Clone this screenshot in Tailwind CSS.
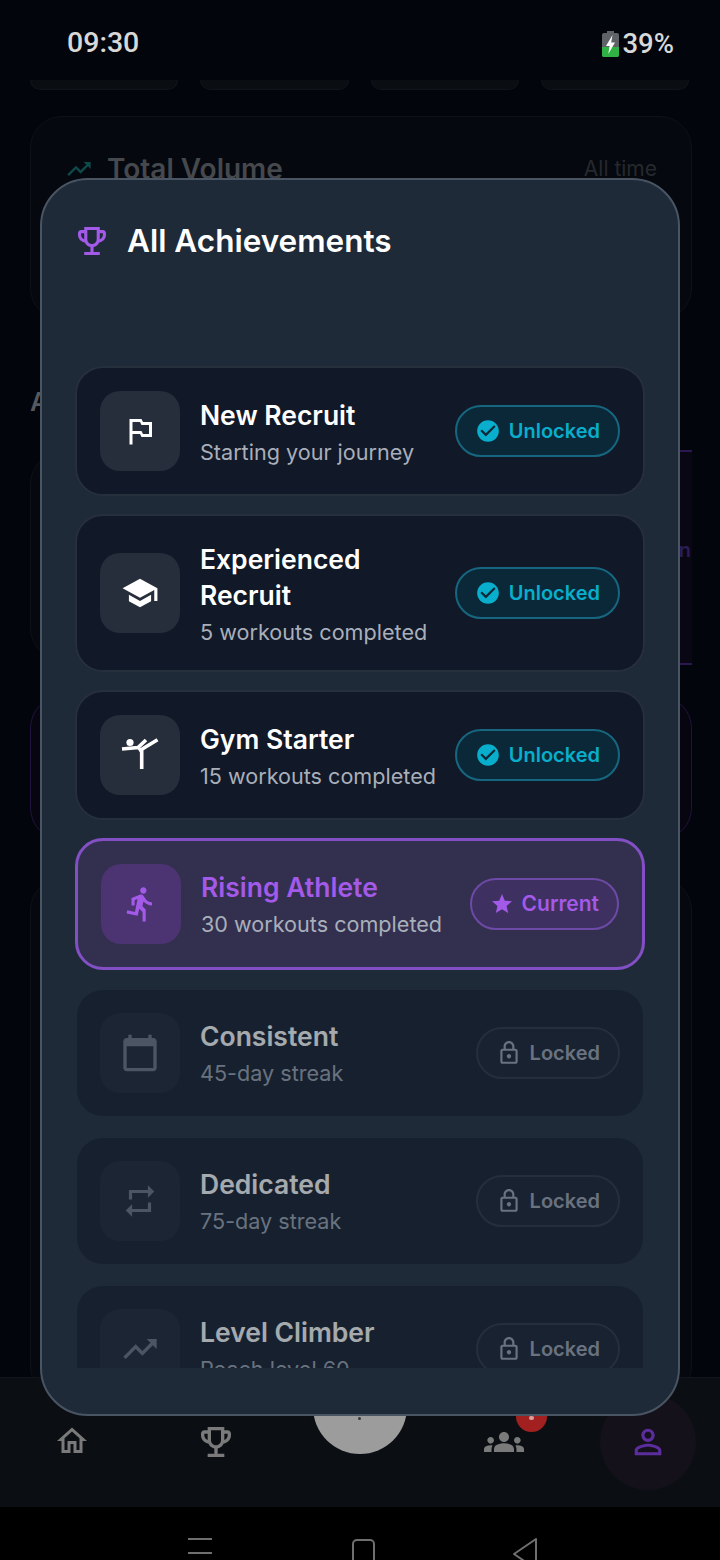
<!DOCTYPE html>
<html lang="en">
<head>
    <meta charset="UTF-8">
    <meta name="viewport" content="width=device-width, initial-scale=1.0">
    <title>All Achievements</title>
    <script src="https://cdn.jsdelivr.net/npm/@tailwindcss/browser@4"></script>
</head>
<body class="bg-[#02050c]">
<div class="relative w-[720px] h-[1560px] overflow-hidden bg-[#02050c] font-['Inter',sans-serif]">

    <!-- Status bar -->
    <div class="h-[80px] flex justify-between items-center pl-[67px] pr-[46px] pt-[7px] text-[#d8d8d8] text-[27.5px] font-medium font-['Roboto',sans-serif]">
        <span class="text-[28.5px]">09:30</span>
        <div class="flex items-center gap-[3px]">
            <svg class="w-[17px] h-[26px]" viewBox="0 0 17 26">
                <rect x="5" y="0" width="7" height="3" fill="#5f6368"/>
                <rect x="0" y="2" width="17" height="24" rx="2" fill="#5f6368"/>
                <path d="M0 16h17v8a2 2 0 0 1-2 2H2a2 2 0 0 1-2-2z" fill="#2fb344"/>
                <path d="M10.5 4 4 15h3.6L6.3 23 13 11.5H9.2z" fill="#fff"/>
            </svg>
            <span>39%</span>
        </div>
    </div>

    <!-- Dimmed page behind the dialog -->
    <div class="h-[1297px] pl-[30px] pr-[28px] overflow-hidden">
        <div class="grid grid-cols-4 gap-[22px] h-[10px] pr-[3px]">
            <div class="rounded-b-[24px] border border-t-0 border-[#11141a] bg-[#0a0d12]"></div>
            <div class="rounded-b-[24px] border border-t-0 border-[#11141a] bg-[#0a0d12]"></div>
            <div class="rounded-b-[24px] border border-t-0 border-[#11141a] bg-[#0a0d12]"></div>
            <div class="rounded-b-[24px] border border-t-0 border-[#11141a] bg-[#0a0d12]"></div>
        </div>
        <div class="mt-[26px] h-[204px] rounded-[32px] border border-[#0e1116] bg-[#05080e] px-[34px] pt-[34px] flex justify-between items-start">
            <div class="flex items-center gap-[14px]">
                <svg class="w-[28px] h-[28px] text-[#0e4a4a]" viewBox="0 0 24 24" fill="currentColor"><path d="M16 6l2.29 2.29-4.88 4.88-4-4L2 16.59 3.41 18l6-6 4 4 6.3-6.29L22 12V6z"/></svg>
                <span class="text-[28px] leading-[36px] font-semibold text-[#45484d]">Total Volume</span>
            </div>
            <span class="text-[21px] leading-[36px] text-[#26292d]">All time</span>
        </div>
        <div class="mt-[64px] text-[26px] leading-[36px] font-semibold text-[#55585c]">All</div>
        <div class="mt-[32px] h-[208px] relative rounded-[32px] border border-[#0e1116] bg-[#05080e]">
            <div class="absolute right-[-1px] top-[-3px] w-[40px] h-[215px] bg-[#0a0714] border-y-2 border-[#2c1850] flex items-center justify-end pb-[16px]">
                <span class="text-[20px] font-semibold text-[#2d1c55] pr-[1px]">in</span>
            </div>
        </div>
        <div class="mt-[36px] h-[144px] rounded-[32px] border border-[#21123f] bg-[#070510]"></div>
        <div class="mt-[38px] h-[520px] rounded-[32px] border border-[#0e1116] bg-[#05080e]"></div>
    </div>

    <!-- Bottom navigation -->
    <div class="relative h-[130px] bg-[#0b0f14] border-t border-[#12161c]">
        <div class="absolute left-[600px] top-[16px] w-[96px] h-[96px] rounded-full bg-[#14111b]"></div>
        <div class="absolute left-[313px] top-[-18px] w-[94px] h-[94px] rounded-full bg-[#9c9c9c]"></div>
        <div class="absolute left-[516px] top-[22px] w-[31px] h-[32px] rounded-full bg-[#a32020]"></div>
        <div class="absolute left-[358px] top-[39px] w-[3px] h-[3px] rounded-full bg-[#3a3a3a]"></div>
        <div class="absolute left-[529px] top-[38px] w-[5px] h-[4px] rounded-full bg-[#d9a0a0]"></div>
        <svg class="absolute left-[54px] top-[45px] w-[36px] h-[36px] text-[#7a7a7a]" viewBox="0 0 24 24" fill="currentColor"><path d="M12 5.69l5 4.5V18h-2v-6H9v6H7v-7.81l5-4.5M12 3L2 12h3v8h6v-6h2v6h6v-8h3L12 3z"/></svg>
        <svg class="absolute left-[196px] top-[44px] w-[40px] h-[40px] text-[#7a7a7a]" viewBox="0 0 24 24" fill="currentColor"><path d="M19 5h-2V3H7v2H5c-1.1 0-2 .9-2 2v1c0 2.55 1.92 4.63 4.39 4.94.63 1.5 1.98 2.63 3.61 2.96V19H7v2h10v-2h-4v-3.1c1.63-.33 2.98-1.46 3.61-2.96C19.08 12.63 21 10.55 21 8V7c0-1.1-.9-2-2-2zM5 8V7h2v3.82C5.84 10.4 5 9.3 5 8zm7 6c-1.65 0-3-1.35-3-3V5h6v6c0 1.65-1.35 3-3 3zm7-6c0 1.3-.84 2.4-2 2.82V7h2v1z"/></svg>
        <svg class="absolute left-[484px] top-[44px] w-[40px] h-[40px] text-[#7a7a7a]" viewBox="0 0 24 24" fill="currentColor"><path d="M12 12.75c1.63 0 3.07.39 4.24.9 1.08.48 1.76 1.56 1.76 2.74V18H6v-1.61c0-1.18.68-2.26 1.76-2.74 1.17-.52 2.61-.9 4.24-.9zM4 13c1.1 0 2-.9 2-2s-.9-2-2-2-2 .9-2 2 .9 2 2 2zm1.13 1.1C4.76 14.04 4.39 14 4 14c-.99 0-1.93.21-2.78.58C.48 14.9 0 15.62 0 16.43V18h4.5v-1.61c0-.83.23-1.61.63-2.29zM20 13c1.1 0 2-.9 2-2s-.9-2-2-2-2 .9-2 2 .9 2 2 2zm4 3.43c0-.81-.48-1.53-1.22-1.85C21.93 14.21 20.99 14 20 14c-.39 0-.76.04-1.13.1.4.68.63 1.46.63 2.29V18H24v-1.57zM12 6c1.66 0 3 1.34 3 3s-1.34 3-3 3-3-1.34-3-3 1.34-3 3-3z"/></svg>
        <svg class="absolute left-[628px] top-[44px] w-[40px] h-[40px] text-[#5b2d9e]" viewBox="0 0 24 24" fill="currentColor"><path d="M12 5.9c1.16 0 2.1.94 2.1 2.1s-.94 2.1-2.1 2.1S9.9 9.16 9.9 8s.94-2.1 2.1-2.1m0 9c2.97 0 6.1 1.46 6.1 2.1v1.1H5.9V17c0-.64 3.13-2.1 6.1-2.1M12 4C9.79 4 8 5.79 8 8s1.79 4 4 4 4-1.79 4-4-1.79-4-4-4zm0 9c-2.67 0-8 1.34-8 4v3h16v-3c0-2.66-5.33-4-8-4z"/></svg>
    </div>

    <!-- System navigation -->
    <div class="relative h-[53px] bg-black overflow-hidden">
        <div class="absolute left-[188px] top-[31px] w-[24px] h-[2px] bg-[#6f6f6f]"></div>
        <div class="absolute left-[188px] top-[45px] w-[24px] h-[2px] bg-[#6f6f6f]"></div>
        <div class="absolute left-[352px] top-[32px] w-[23px] h-[40px] rounded-[5px] border-2 border-[#6f6f6f]"></div>
        <svg class="absolute left-[512px] top-[30px] w-[28px] h-[40px]" viewBox="0 0 28 40" fill="none" stroke="#6f6f6f" stroke-width="2" stroke-linejoin="round"><path d="M24 2 2 17l22 15z"/></svg>
    </div>

    <!-- Dialog -->
    <div class="absolute left-[40px] top-[178px] w-[640px] h-[1238px] rounded-[48px] border-2 border-[#4a5564] bg-[#1e2a38] px-[33px] flex flex-col">
        <div class="h-[186px] flex items-start pt-[40px]">
            <svg class="w-[28px] h-[28px] ml-[3px] mr-[21px] mt-[7px] text-[#a35ae8] shrink-0" viewBox="3 3 18 18" fill="currentColor"><path d="M19 5h-2V3H7v2H5c-1.1 0-2 .9-2 2v1c0 2.55 1.92 4.63 4.39 4.94.63 1.5 1.98 2.63 3.61 2.96V19H7v2h10v-2h-4v-3.1c1.63-.33 2.98-1.46 3.61-2.96C19.08 12.63 21 10.55 21 8V7c0-1.1-.9-2-2-2zM5 8V7h2v3.82C5.84 10.4 5 9.3 5 8zm7 6c-1.65 0-3-1.35-3-3V5h6v6c0 1.65-1.35 3-3 3zm7-6c0 1.3-.84 2.4-2 2.82V7h2v1z"/></svg>
            <h2 class="text-[31.5px] leading-[42px] font-semibold text-white">All Achievements</h2>
        </div>

        <div class="h-[1002px] overflow-hidden flex flex-col gap-[18px]">
            <!-- New Recruit -->
            <div class="shrink-0 flex items-center rounded-[28px] border-2 border-[#262f3c] bg-[#111827] p-[23px]">
                <div class="w-[80px] h-[80px] shrink-0 rounded-[20px] bg-[#272e3b] flex items-center justify-center">
                    <svg class="w-[36px] h-[36px] text-white" viewBox="0 0 24 24" fill="currentColor"><path d="M14 6l-1-2H5v17h2v-7h5l1 2h7V6h-6zm4 8h-4l-1-2H7V6h5l1 2h5v6z"/></svg>
                </div>
                <div class="ml-[20px] pt-[4px] flex-1 min-w-0">
                    <div class="text-[26.5px] leading-[36px] font-semibold text-white">New Recruit</div>
                    <div class="mt-[2px] text-[21.6px] leading-[34px] text-[#a9afba]">Starting your journey</div>
                </div>
                <div class="ml-[16px] shrink-0 h-[52px] inline-flex items-center gap-[8px] rounded-full border-2 border-[#17667f] bg-[#0b2838] px-[18px] text-[20px] font-semibold text-[#08aecb]">
                    <svg class="w-[26px] h-[26px]" viewBox="0 0 24 24" fill="currentColor"><path d="M12 2C6.48 2 2 6.48 2 12s4.48 10 10 10 10-4.48 10-10S17.52 2 12 2zm-2 15l-5-5 1.41-1.41L10 14.17l7.59-7.59L19 8l-9 9z"/></svg>
                    <span>Unlocked</span>
                </div>
            </div>

            <!-- Experienced Recruit -->
            <div class="shrink-0 flex items-center rounded-[28px] border-2 border-[#262f3c] bg-[#111827] px-[23px] py-[21px]">
                <div class="w-[80px] h-[80px] shrink-0 rounded-[20px] bg-[#272e3b] flex items-center justify-center">
                    <svg class="w-[38px] h-[38px] text-white" viewBox="0 0 24 24" fill="currentColor"><path d="M12 3L1 9l11 6 9-4.91V17h2V9L12 3z"/><path d="M5 13.18v4L12 21l7-3.82v-4L12 17l-7-3.82z"/></svg>
                </div>
                <div class="ml-[20px] pt-[4px] flex-1 min-w-0">
                    <div class="text-[26.5px] leading-[36px] font-semibold text-white">Experienced Recruit</div>
                    <div class="mt-[2px] text-[21.6px] leading-[34px] text-[#a9afba]">5 workouts completed</div>
                </div>
                <div class="ml-[16px] shrink-0 h-[52px] inline-flex items-center gap-[8px] rounded-full border-2 border-[#17667f] bg-[#0b2838] px-[18px] text-[20px] font-semibold text-[#08aecb]">
                    <svg class="w-[26px] h-[26px]" viewBox="0 0 24 24" fill="currentColor"><path d="M12 2C6.48 2 2 6.48 2 12s4.48 10 10 10 10-4.48 10-10S17.52 2 12 2zm-2 15l-5-5 1.41-1.41L10 14.17l7.59-7.59L19 8l-9 9z"/></svg>
                    <span>Unlocked</span>
                </div>
            </div>

            <!-- Gym Starter -->
            <div class="shrink-0 flex items-center rounded-[28px] border-2 border-[#262f3c] bg-[#111827] p-[23px]">
                <div class="w-[80px] h-[80px] shrink-0 rounded-[20px] bg-[#272e3b] flex items-center justify-center">
                    <svg class="w-[38px] h-[34px] text-white" viewBox="0 0 38 34">
                        <circle cx="9" cy="4.5" r="3.6" fill="currentColor"/>
                        <path d="M1 11 17 9.5 25 2M18 13 36.5 1.7M20.7 10v21" fill="none" stroke="currentColor" stroke-width="3.6"/>
                    </svg>
                </div>
                <div class="ml-[20px] pt-[4px] flex-1 min-w-0">
                    <div class="text-[26.5px] leading-[36px] font-semibold text-white">Gym Starter</div>
                    <div class="mt-[2px] text-[21.6px] leading-[34px] text-[#a9afba] whitespace-nowrap">15 workouts completed</div>
                </div>
                <div class="ml-[16px] shrink-0 h-[52px] inline-flex items-center gap-[8px] rounded-full border-2 border-[#17667f] bg-[#0b2838] px-[18px] text-[20px] font-semibold text-[#08aecb]">
                    <svg class="w-[26px] h-[26px]" viewBox="0 0 24 24" fill="currentColor"><path d="M12 2C6.48 2 2 6.48 2 12s4.48 10 10 10 10-4.48 10-10S17.52 2 12 2zm-2 15l-5-5 1.41-1.41L10 14.17l7.59-7.59L19 8l-9 9z"/></svg>
                    <span>Unlocked</span>
                </div>
            </div>

            <!-- Rising Athlete (current) -->
            <div class="shrink-0 flex items-center rounded-[28px] border-[3px] border-[#8250c4] bg-[#332f4f] p-[23px]">
                <div class="w-[80px] h-[80px] shrink-0 rounded-[20px] bg-[#4c3371] flex items-center justify-center">
                    <svg class="w-[38px] h-[38px] text-[#a35ae8]" viewBox="0 0 24 24" fill="currentColor"><path d="M13.49 5.48c1.1 0 2-.9 2-2s-.9-2-2-2-2 .9-2 2 .9 2 2 2zm-3.6 13.9l1-4.4 2.1 2v6h2v-7.5l-2.1-2 .6-3c1.3 1.5 3.3 2.5 5.5 2.5v-2c-1.9 0-3.5-1-4.3-2.4l-1-1.6c-.4-.6-1-1-1.7-1-.3 0-.5.1-.8.1l-5.2 2.2v4.7h2v-3.4l1.8-.7-1.6 8.1-4.9-1-.4 2 7 1.4z"/></svg>
                </div>
                <div class="ml-[20px] pt-[2px] flex-1 min-w-0">
                    <div class="text-[26.5px] leading-[36px] font-semibold text-[#a35ae8]">Rising Athlete</div>
                    <div class="mt-[2px] text-[21.6px] leading-[34px] text-[#a9afba] whitespace-nowrap">30 workouts completed</div>
                </div>
                <div class="ml-[16px] shrink-0 h-[52px] inline-flex items-center gap-[8px] rounded-full border-2 border-[#6d4aa5] bg-[#3e3060] px-[18px] text-[21px] font-semibold text-[#a35ae8]">
                    <svg class="w-[24px] h-[24px]" viewBox="0 0 24 24" fill="currentColor"><path d="M12 17.27L18.18 21l-1.64-7.03L22 9.24l-7.19-.61L12 2 9.19 8.63 2 9.24l5.46 4.73L5.82 21z"/></svg>
                    <span>Current</span>
                </div>
            </div>

            <!-- Consistent -->
            <div class="shrink-0 flex items-center rounded-[28px] border-2 border-transparent bg-clip-padding bg-[#131b28] p-[23px] opacity-60">
                <div class="w-[80px] h-[80px] shrink-0 rounded-[20px] bg-[#1a2331] flex items-center justify-center">
                    <svg class="w-[40px] h-[40px] text-[#6b7280]" viewBox="0 0 24 24" fill="currentColor"><path d="M20 3h-1V1h-2v2H7V1H5v2H4c-1.1 0-2 .9-2 2v16c0 1.1.9 2 2 2h16c1.1 0 2-.9 2-2V5c0-1.1-.9-2-2-2zm0 18H4V8h16v13z"/></svg>
                </div>
                <div class="ml-[20px] pt-[2px] flex-1 min-w-0">
                    <div class="text-[26.5px] leading-[36px] font-semibold text-white">Consistent</div>
                    <div class="mt-[2px] text-[21.6px] leading-[34px] text-[#9ca3af]">45-day streak</div>
                </div>
                <div class="ml-[16px] shrink-0 h-[52px] inline-flex items-center gap-[8px] rounded-full border-2 border-[#283341] bg-[#161e2b] px-[18px] text-[20px] font-semibold text-[#9ca3af]">
                    <svg class="w-[26px] h-[26px]" viewBox="0 0 24 24" fill="currentColor"><path d="M18 8h-1V6c0-2.76-2.24-5-5-5S7 3.24 7 6v2H6c-1.1 0-2 .9-2 2v10c0 1.1.9 2 2 2h12c1.1 0 2-.9 2-2V10c0-1.1-.9-2-2-2zM9 6c0-1.66 1.34-3 3-3s3 1.34 3 3v2H9V6zm9 14H6V10h12v10zm-6-3c1.1 0 2-.9 2-2s-.9-2-2-2-2 .9-2 2 .9 2 2 2z"/></svg>
                    <span>Locked</span>
                </div>
            </div>

            <!-- Dedicated -->
            <div class="shrink-0 flex items-center rounded-[28px] border-2 border-transparent bg-clip-padding bg-[#131b28] p-[23px] opacity-60">
                <div class="w-[80px] h-[80px] shrink-0 rounded-[20px] bg-[#1a2331] flex items-center justify-center">
                    <svg class="w-[38px] h-[38px] text-[#6b7280]" viewBox="0 0 24 24" fill="currentColor"><path d="M7 7h10v3l4-4-4-4v3H5v6h2V7zm10 10H7v-3l-4 4 4 4v-3h12v-6h-2v4z"/></svg>
                </div>
                <div class="ml-[20px] pt-[2px] flex-1 min-w-0">
                    <div class="text-[26.5px] leading-[36px] font-semibold text-white">Dedicated</div>
                    <div class="mt-[2px] text-[21.6px] leading-[34px] text-[#9ca3af]">75-day streak</div>
                </div>
                <div class="ml-[16px] shrink-0 h-[52px] inline-flex items-center gap-[8px] rounded-full border-2 border-[#283341] bg-[#161e2b] px-[18px] text-[20px] font-semibold text-[#9ca3af]">
                    <svg class="w-[26px] h-[26px]" viewBox="0 0 24 24" fill="currentColor"><path d="M18 8h-1V6c0-2.76-2.24-5-5-5S7 3.24 7 6v2H6c-1.1 0-2 .9-2 2v10c0 1.1.9 2 2 2h12c1.1 0 2-.9 2-2V10c0-1.1-.9-2-2-2zM9 6c0-1.66 1.34-3 3-3s3 1.34 3 3v2H9V6zm9 14H6V10h12v10zm-6-3c1.1 0 2-.9 2-2s-.9-2-2-2-2 .9-2 2 .9 2 2 2z"/></svg>
                    <span>Locked</span>
                </div>
            </div>

            <!-- Level Climber -->
            <div class="shrink-0 flex items-center rounded-[28px] border-2 border-transparent bg-clip-padding bg-[#131b28] p-[23px] opacity-60">
                <div class="w-[80px] h-[80px] shrink-0 rounded-[20px] bg-[#1a2331] flex items-center justify-center">
                    <svg class="w-[40px] h-[40px] text-[#6b7280]" viewBox="0 0 24 24" fill="currentColor"><path d="M16 6l2.29 2.29-4.88 4.88-4-4L2 16.59 3.41 18l6-6 4 4 6.3-6.29L22 12V6z"/></svg>
                </div>
                <div class="ml-[20px] pt-[2px] flex-1 min-w-0">
                    <div class="text-[26.5px] leading-[36px] font-semibold text-white">Level Climber</div>
                    <div class="mt-[2px] text-[21.6px] leading-[34px] text-[#9ca3af]">Reach level 60</div>
                </div>
                <div class="ml-[16px] shrink-0 h-[52px] inline-flex items-center gap-[8px] rounded-full border-2 border-[#283341] bg-[#161e2b] px-[18px] text-[20px] font-semibold text-[#9ca3af]">
                    <svg class="w-[26px] h-[26px]" viewBox="0 0 24 24" fill="currentColor"><path d="M18 8h-1V6c0-2.76-2.24-5-5-5S7 3.24 7 6v2H6c-1.1 0-2 .9-2 2v10c0 1.1.9 2 2 2h12c1.1 0 2-.9 2-2V10c0-1.1-.9-2-2-2zM9 6c0-1.66 1.34-3 3-3s3 1.34 3 3v2H9V6zm9 14H6V10h12v10zm-6-3c1.1 0 2-.9 2-2s-.9-2-2-2-2 .9-2 2 .9 2 2 2z"/></svg>
                    <span>Locked</span>
                </div>
            </div>
        </div>
    </div>
</div>
</body>
</html>
